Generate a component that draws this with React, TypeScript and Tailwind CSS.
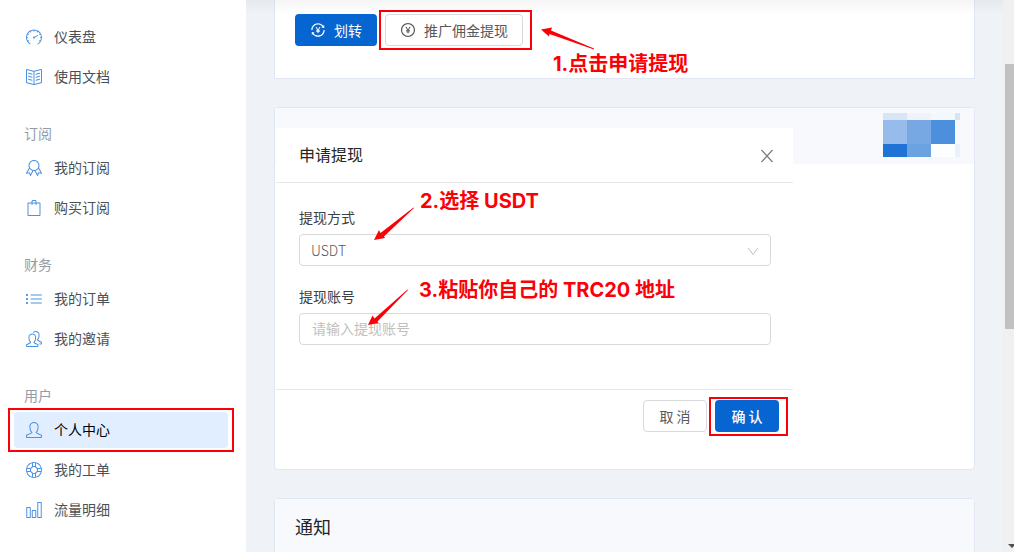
import React, { useState } from 'react';
import type { IconType } from 'react-icons';
import {
  SlSpeedometer,
  SlBookOpen,
  SlBadge,
  SlBag,
  SlList,
  SlPeople,
  SlUser,
  SlSupport,
  SlChart
} from 'react-icons/sl';
import { AiOutlineTransaction, AiOutlinePayCircle } from 'react-icons/ai';

interface NavItem {
  label: string;
  icon: IconType;
}

interface NavGroup {
  title?: string;
  items: NavItem[];
}

const navGroups: NavGroup[] = [
  {
    items: [
      { label: '仪表盘', icon: SlSpeedometer },
      { label: '使用文档', icon: SlBookOpen }
    ]
  },
  {
    title: '订阅',
    items: [
      { label: '我的订阅', icon: SlBadge },
      { label: '购买订阅', icon: SlBag }
    ]
  },
  {
    title: '财务',
    items: [
      { label: '我的订单', icon: SlList },
      { label: '我的邀请', icon: SlPeople }
    ]
  },
  {
    title: '用户',
    items: [
      { label: '个人中心', icon: SlUser },
      { label: '我的工单', icon: SlSupport },
      { label: '流量明细', icon: SlChart }
    ]
  }
];

const mosaic = [
  'bg-[#d9e5f5]', 'bg-[#eff3f9]', 'bg-[#f4f7fb]', 'bg-[#d6e4f8]',
  'bg-[#97bbea]', 'bg-[#78a8e3]', 'bg-[#4c8fdc]', 'bg-[#f8f9fd]',
  'bg-[#1f73d4]', 'bg-[#6ba2e1]', 'bg-[#fdfeff]', 'bg-[#eaf1fa]'
];

const Highlight: React.FC<{ className: string }> = ({ className }) => (
  <span className={`pointer-events-none absolute border-2 border-[#fb0007] ${className}`} />
);

const Note: React.FC<{ className: string; children: React.ReactNode }> = ({ className, children }) => (
  <p
    className={`pointer-events-none absolute whitespace-nowrap font-['Inter','Noto_Sans_CJK_SC',sans-serif] text-[20px] leading-7 font-bold text-[#fb0007] ${className}`}
  >
    {children}
  </p>
);

const Sidebar: React.FC = () => {
  const [active, setActive] = useState('个人中心');

  return (
    <nav className="w-[246px] shrink-0 bg-white pt-[19px] pr-[18px] pl-3.5">
      {navGroups.map((group, index) => (
        <div key={index} className={index > 0 ? 'mt-7' : ''}>
          {group.title && (
            <h2 className="mb-[7px] pl-2.5 text-sm leading-5 text-[#959ca6]">{group.title}</h2>
          )}
          <ul className="space-y-1">
            {group.items.map(({ label, icon: Icon }) => (
              <li key={label} className="relative">
                <a
                  href="#"
                  onClick={() => setActive(label)}
                  className={`flex h-9 items-center gap-3 rounded px-3 text-sm ${
                    active === label ? 'bg-[#e1eeff] text-black' : 'text-[#495057]'
                  }`}
                >
                  <Icon className="h-4 w-4 text-[#4c92e2]" />
                  <span className="pb-0.5">{label}</span>
                </a>
                {active === label && <Highlight className="-top-1 -right-1.5 -bottom-1 -left-1.5" />}
              </li>
            ))}
          </ul>
        </div>
      ))}
    </nav>
  );
};

const WithdrawDialog: React.FC = () => {
  const [method, setMethod] = useState('USDT');
  const [account, setAccount] = useState('');

  return (
    <section role="dialog" aria-labelledby="withdraw-title" className="relative w-full max-w-[517px] bg-white">
      <header className="flex h-[55px] items-center justify-between border-b border-[#e8e8e8] pr-[19px] pl-[23px]">
        <h3 id="withdraw-title" className="pb-0.5 text-base text-[#262626]">申请提现</h3>
        <button type="button" aria-label="关闭" className="mt-0.5 text-[#808080]">
          <svg width="14" height="14" viewBox="0 0 14 14" fill="none" stroke="currentColor" strokeWidth="1.300">
            <path d="M1.500 1 12.500 13M12.500 1 1.500 13" />
          </svg>
        </button>
      </header>

      <div className="pt-[23px] pr-[22px] pb-11 pl-[23px] text-sm text-[#404040]">
        <label htmlFor="method" className="block leading-[22px]">提现方式</label>
        <div className="relative mt-1.5">
          <select
            id="method"
            value={method}
            onChange={(e) => setMethod(e.target.value)}
            className="block h-8 w-full appearance-none rounded border border-[#d9d9d9] bg-white px-[11px] font-light text-[#595959]"
          >
            <option value="USDT">USDT</option>
          </select>
          <svg
            className="pointer-events-none absolute top-3 right-3 text-[#bfbfbf]"
            width="12"
            height="10"
            viewBox="0 0 12 10"
            fill="none"
            stroke="currentColor"
          >
            <path d="M1 2 6 8.500 11 2" />
          </svg>
        </div>

        <label htmlFor="account" className="mt-[19px] block leading-[22px]">提现账号</label>
        <input
          id="account"
          type="text"
          value={account}
          onChange={(e) => setAccount(e.target.value)}
          placeholder="请输入提现账号"
          className="mt-1.5 block h-8 w-full rounded border border-[#d9d9d9] bg-white px-3 pb-0.5 placeholder:text-[#bfbfbf]"
        />
      </div>

      <footer className="flex justify-end gap-2 border-t border-[#e8e8e8] px-3.5 py-2.5 text-sm">
        <button type="button" className="h-8 w-16 rounded border border-[#d9d9d9] bg-white text-[#595959]">
          取 消
        </button>
        <div className="relative">
          <button type="button" className="h-8 w-16 rounded bg-[#0665d0] font-medium text-white">确 认</button>
          <Highlight className="-top-[3px] -right-[9px] -bottom-1 -left-1.5" />
        </div>
      </footer>

      {/* Steps 2 and 3 */}
      <Note className="top-[59px] left-36">2.选择 USDT</Note>
      <svg className="pointer-events-none absolute top-[79px] left-[97px]" width="42" height="34" fill="#fb0007">
        <path d="M1 33 6 23 7.500 26 40.500 .5 41 1 11 29.500 12 31Z" />
      </svg>
      <Note className="top-[148px] left-[143px]">3.粘贴你自己的 TRC20 地址</Note>
      <svg className="pointer-events-none absolute top-[161px] left-[91px]" width="42" height="37" fill="#fb0007">
        <path d="M1 36 5.500 26.500 7.500 29.500 40.500 .5 41 1 10.500 32.500 11.500 34Z" />
      </svg>
    </section>
  );
};

const App: React.FC = () => {
  return (
    <div className="flex h-screen overflow-hidden bg-[#eff3f8] font-['Noto_Sans_CJK_SC',sans-serif]">
      <Sidebar />

      <main className="relative min-w-0 flex-1 px-7">
        {/* Commission */}
        <section className="relative border border-t-0 border-[#e1e6f3] bg-white px-5 pt-3.5 pb-8">
          <div className="flex gap-2 text-sm">
            <button
              type="button"
              className="flex h-8 items-center gap-2 rounded bg-[#0665d0] px-[15px] text-white"
            >
              <AiOutlineTransaction className="h-4 w-4" />
              <span>划转</span>
            </button>
            <div className="relative">
              <button
                type="button"
                className="flex h-8 items-center gap-2 rounded border border-[#d9d9d9] bg-white px-3.5 text-[#595959]"
              >
                <AiOutlinePayCircle className="h-4 w-4" />
                <span>推广佣金提现</span>
              </button>
              <Highlight className="-top-1 -right-[9px] -bottom-1 -left-1.5" />
            </div>
          </div>
          <svg className="pointer-events-none absolute top-[27px] left-[265px]" width="55" height="24" fill="#fb0007">
            <path d="M1 2.500 12 .5 11 3.500 54 21.500 54 22.500 9.500 7 9 9.500Z" />
          </svg>
          <Note className="top-[50px] left-[278px]">1.点击申请提现</Note>
        </section>

        {/* Withdraw */}
        <section className="mt-7 rounded border border-[#e1e6f3] bg-white pb-[27px]">
          <header className="flex h-14 justify-end bg-[#f8f9fd] pt-[5px] pr-3.5">
            <div className="grid h-11 grid-cols-[24px_24px_24px_5px] grid-rows-[7px_24px_13px]">
              {mosaic.map((color, i) => (
                <span key={i} className={color} />
              ))}
            </div>
          </header>
          <div className="-mt-9 pl-px">
            <WithdrawDialog />
          </div>
        </section>

        {/* Notifications */}
        <section className="mt-7 rounded border border-[#e1e6f3] bg-white">
          <header className="flex h-14 items-center bg-[#f8f9fd] px-5">
            <h3 className="pb-0.5 text-lg text-[#212529]">通知</h3>
          </header>
        </section>

        <div className="pointer-events-none absolute inset-x-0 top-0 h-3.5 bg-linear-to-b from-black/4 to-transparent" />
      </main>

      {/* Scroll track */}
      <div className="flex w-[11px] shrink-0 flex-col justify-between overflow-hidden bg-[#f0f0f0] pt-16 pb-1 pl-0.5">
        <div className="h-[265px] bg-[#c1c1c1]" />
        <svg className="ml-[3px] shrink-0" width="8" height="4" fill="#505050">
          <path d="M0 0H8L4 4Z" />
        </svg>
      </div>
    </div>
  );
};

export default App;
